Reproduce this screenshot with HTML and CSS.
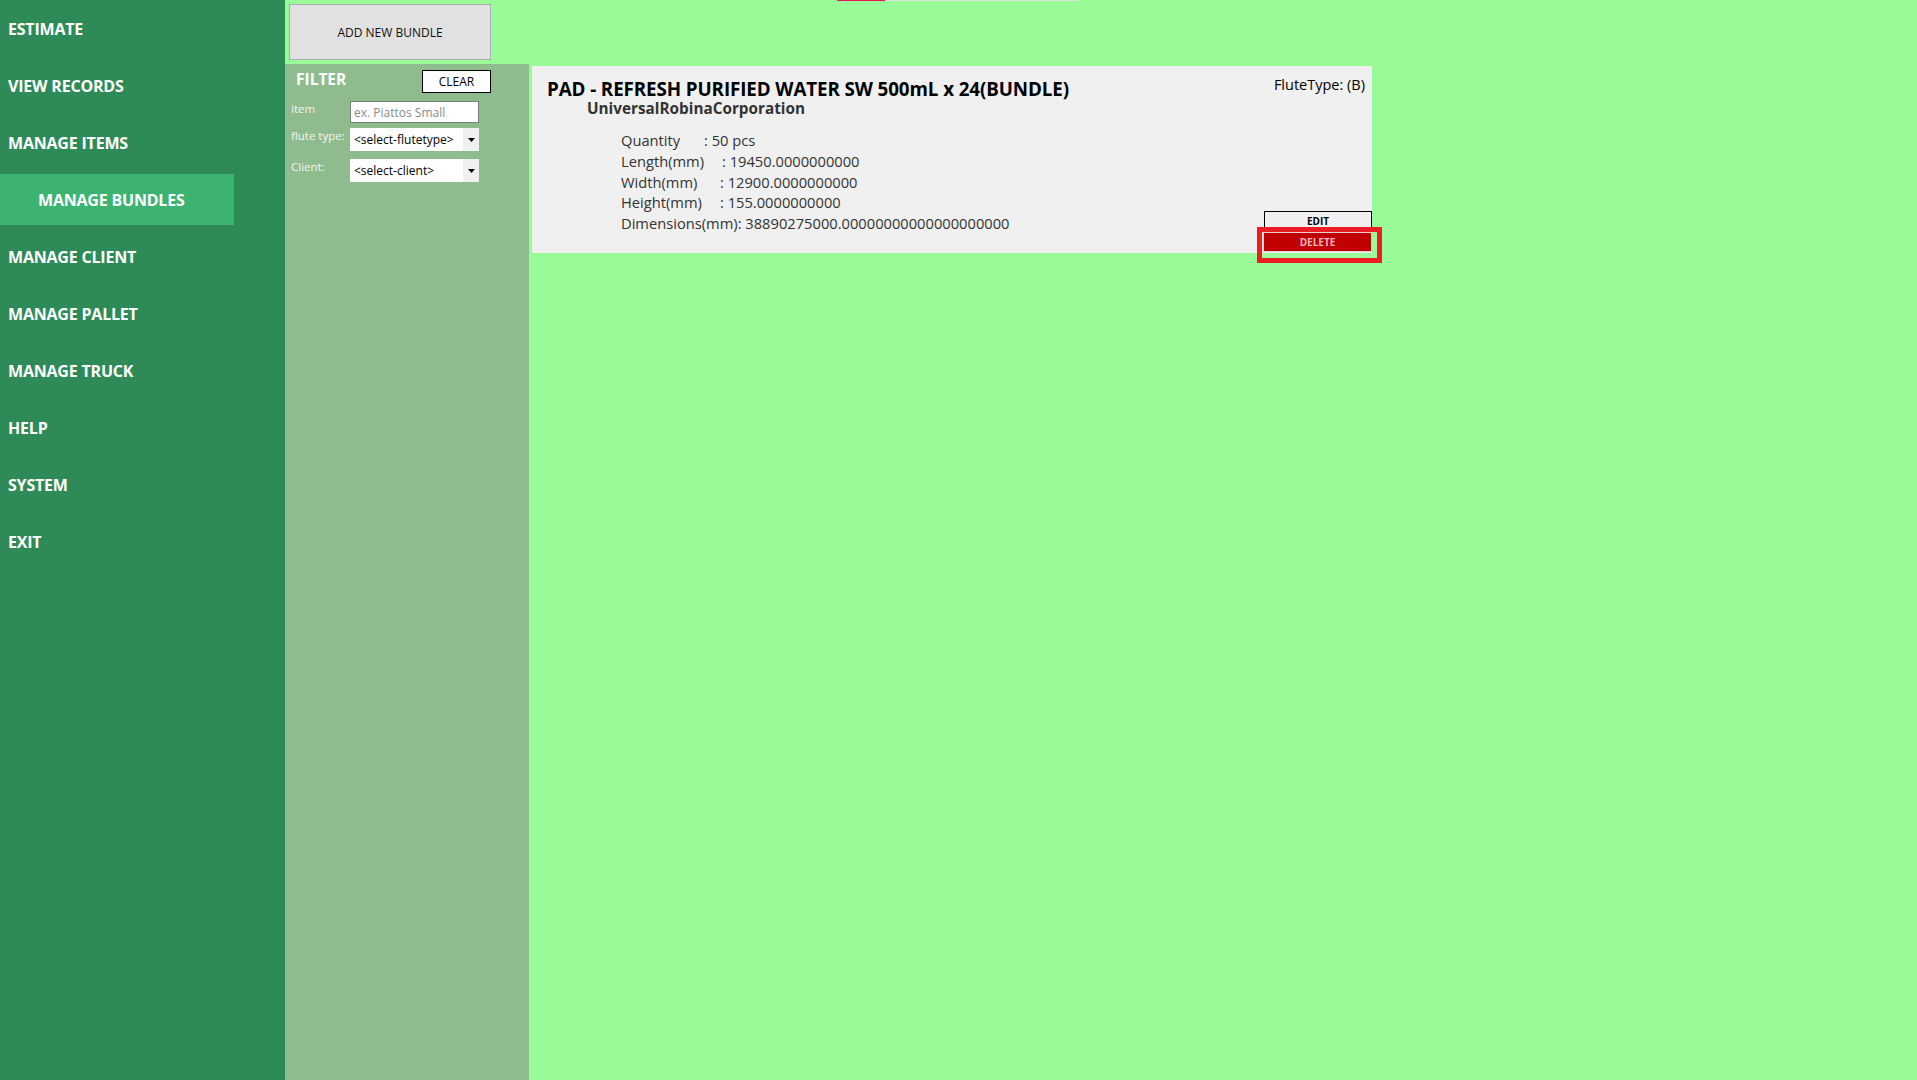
FILE: index.html
```html
<!DOCTYPE html>
<html>
<head>
<meta charset="utf-8">
<link rel="stylesheet" href="styles.css">
</head>
<body>
<div class="app">
  <div class="progress"><span class="progress-fill"></span><span class="progress-rest"></span></div>
  <nav class="sidebar">
    <div class="nav-item">ESTIMATE</div>
    <div class="nav-item">VIEW RECORDS</div>
    <div class="nav-item">MANAGE ITEMS</div>
    <div class="nav-item active">MANAGE BUNDLES</div>
    <div class="nav-item">MANAGE CLIENT</div>
    <div class="nav-item">MANAGE PALLET</div>
    <div class="nav-item">MANAGE TRUCK</div>
    <div class="nav-item">HELP</div>
    <div class="nav-item">SYSTEM</div>
    <div class="nav-item">EXIT</div>
  </nav>
  <main class="main">
    <div class="topbar">
      <button class="add-btn">ADD NEW BUNDLE</button>
    </div>
    <div class="workspace">
      <aside class="filter">
        <div class="filter-head">
          <span class="filter-title">FILTER</span>
          <button class="clear-btn">CLEAR</button>
        </div>
        <div class="f-row">
          <label class="f-label">item</label>
          <div class="f-input"><span class="placeholder">ex. Piattos Small</span></div>
        </div>
        <div class="f-row r-flute">
          <label class="f-label">flute type:</label>
          <div class="f-select"><span class="sel-text">&lt;select-flutetype&gt;</span><span class="sel-arrow"><svg width="7" height="4" viewBox="0 0 7 4"><path d="M0 0h7L3.5 4z" fill="#000"/></svg></span></div>
        </div>
        <div class="f-row r-client">
          <label class="f-label">Client:</label>
          <div class="f-select"><span class="sel-text">&lt;select-client&gt;</span><span class="sel-arrow"><svg width="7" height="4" viewBox="0 0 7 4"><path d="M0 0h7L3.5 4z" fill="#000"/></svg></span></div>
        </div>
      </aside>
      <section class="content">
        <div class="card">
          <div class="card-left">
            <div class="card-title">PAD - REFRESH PURIFIED WATER SW 500mL x 24(BUNDLE)</div>
            <div class="card-company">UniversalRobinaCorporation</div>
            <div class="card-details">
              <div class="d-row"><span class="d-lbl lq">Quantity</span>: 50 pcs</div>
              <div class="d-row"><span class="d-lbl ll">Length(mm)</span>: 19450.0000000000</div>
              <div class="d-row"><span class="d-lbl lw">Width(mm)</span>: 12900.0000000000</div>
              <div class="d-row"><span class="d-lbl lh">Height(mm)</span>: 155.0000000000</div>
              <div class="d-row">Dimensions(mm): 38890275000.00000000000000000000</div>
            </div>
          </div>
          <div class="card-right">
            <div class="flute">FluteType: (B)</div>
            <div class="actions">
              <button class="edit-btn">EDIT</button>
              <button class="delete-btn">DELETE</button>
              <span class="highlight"></span>
            </div>
          </div>
        </div>
      </section>
    </div>
  </main>
</div>
</body>
</html>
```

FILE: styles.css
```css
* { box-sizing: border-box; }
html, body { margin: 0; padding: 0; }
body {
  background: #98fb98;
  font-family: "Open Sans", "Noto Sans", sans-serif;
  color: #000;
  overflow: hidden;
}
.app {
  display: flex;
  height: 100vh;
  position: relative;
}
.progress {
  position: absolute;
  top: 0;
  left: 837px;
  display: flex;
  height: 1px;
}
.progress-fill { width: 48px; background: #e5175a; }
.progress-rest { width: 193px; background: #d9e6d9; }

.sidebar {
  width: 285px;
  flex: none;
  background: #2e8b57;
  display: flex;
  flex-direction: column;
}
.nav-item {
  height: 57px;
  display: flex;
  align-items: center;
  padding-left: 8px;
  color: #fff;
  font-weight: 700;
  font-size: 16px;
  letter-spacing: -0.2px;
}
.nav-item.active {
  height: 51px;
  margin: 3px 0;
  width: 234px;
  background: #3cb371;
  padding-left: 38px;
}

.main {
  flex: 1;
  display: flex;
  flex-direction: column;
}
.topbar {
  height: 64px;
  padding: 4px 0 0 4px;
  flex: none;
}
.add-btn {
  width: 202px;
  height: 56px;
  background: #e1e1e1;
  border: 1px solid #adadad;
  font-family: inherit;
  font-size: 12px;
  color: #111;
  padding: 0;
}
.workspace {
  flex: 1;
  display: flex;
}
.filter {
  width: 244px;
  flex: none;
  background: #8fbc8f;
  padding: 6px 0 0 6px;
}
.filter-head {
  display: flex;
  align-items: flex-start;
  justify-content: space-between;
  width: 200px;
  height: 31px;
}
.filter-title {
  color: #fff;
  font-weight: 700;
  font-size: 15.5px;
  margin-left: 5px;
  line-height: 18px;
}
.clear-btn {
  width: 69px;
  height: 23px;
  background: #fff;
  border: 1px solid #000;
  font-family: inherit;
  font-size: 12px;
  padding: 0;
  color: #000;
}
.f-row {
  display: flex;
  align-items: flex-start;
}
.f-row.r-flute { margin-top: 5px; }
.f-row.r-client { margin-top: 8px; }
.f-label {
  width: 59px;
  flex: none;
  color: #f4f4f4;
  font-size: 11.5px;
  line-height: 14px;
  margin-top: 1px;
}
.f-input {
  width: 129px;
  height: 22px;
  border: 1px solid #7a7a7a;
  background: #fff;
  display: flex;
  align-items: center;
  padding-left: 3px;
}
.placeholder {
  color: #8a8a8a;
  font-size: 12px;
}
.f-select {
  width: 129px;
  height: 23px;
  background: #fff;
  display: flex;
  align-items: center;
}
.sel-text {
  flex: 1;
  font-size: 12px;
  padding-left: 4px;
  color: #000;
}
.sel-arrow {
  width: 16px;
  height: 100%;
  background: #f0f0f0;
  display: flex;
  align-items: center;
  justify-content: center;
}

.content {
  flex: 1;
  padding: 2px 0 0 3px;
}
.card {
  width: 840px;
  height: 187px;
  background: #f0f0f0;
  display: flex;
  justify-content: space-between;
}
.card-left {
  padding: 12px 0 0 15px;
}
.card-title {
  font-weight: 700;
  font-size: 18.8px;
  line-height: 22px;
  letter-spacing: -0.1px;
  color: #000;
  white-space: nowrap;
}
.card-company {
  font-weight: 700;
  font-size: 15.3px;
  line-height: 16px;
  margin-left: 40px;
  color: #333;
}
.card-details {
  margin-left: 74px;
  margin-top: 14px;
  font-size: 14.7px;
  line-height: 20.8px;
  color: #333;
}
.d-lbl { display: inline-block; }
.d-lbl.lq { width: 83px; }
.d-lbl.ll { width: 101px; }
.d-lbl.lw { width: 99px; }
.d-lbl.lh { width: 99px; }

.card-right {
  display: flex;
  flex-direction: column;
  align-items: flex-end;
  justify-content: space-between;
  padding-bottom: 1px;
}
.flute {
  font-size: 14.5px;
  line-height: 20px;
  margin-top: 9px;
  margin-right: 7px;
  color: #000;
  white-space: nowrap;
}
.actions {
  position: relative;
  width: 109px;
  display: flex;
  flex-direction: column;
  align-items: flex-end;
}
.edit-btn {
  width: 108px;
  height: 22px;
  background: #f0f0f0;
  border: 1px solid #000;
  font-family: inherit;
  font-weight: 700;
  font-size: 10px;
  padding: 0 0 2px 0;
  color: #000;
  margin-bottom: -1px;
}
.delete-btn {
  width: 109px;
  height: 20px;
  background: #c00000;
  border: 1px solid #e8d0d0;
  font-family: inherit;
  font-weight: 700;
  font-size: 10px;
  color: #f4b8c0;
  padding: 0;
  position: relative;
}
.highlight {
  position: absolute;
  left: -6px;
  right: -10px;
  bottom: -11px;
  height: 36px;
  border: 5px solid #ed1c24;
  pointer-events: none;
}
```
